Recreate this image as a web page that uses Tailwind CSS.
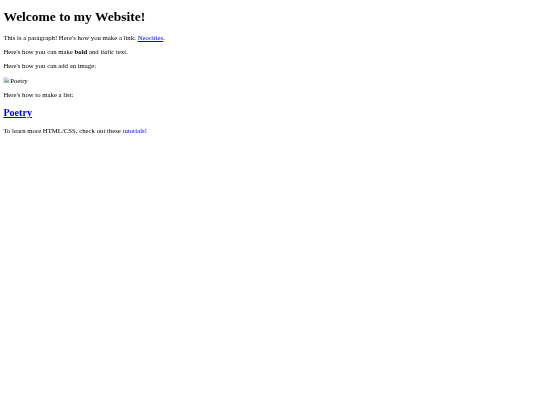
<!DOCTYPE html>
<html lang="en">
<head>
<meta charset="utf-8">
<title>Welcome</title>
<script src="https://cdn.jsdelivr.net/npm/@tailwindcss/browser@4"></script>
</head>
<body class="bg-white text-black font-['Liberation_Serif',serif]">
<main class="flex flex-col gap-[6.75px] px-[3.375px] pt-[9.05px] text-[6.75px] leading-[7.6px] blur-[0.25px]">
  <h1 class="text-[13.5px] leading-[15.6px] font-bold mb-[2.3px]">Welcome to my Website!</h1>
  <p>This is a paragraph! Here's how you make a link: <a href="#" class="text-[#0000ee] underline">Neocities</a>.</p>
  <p>Here's how you can make <strong class="font-bold">bold</strong> and <em class="italic">italic</em> text.</p>
  <p>Here's how you can add an image:</p>
  <p class="flex items-start">
    <svg class="w-[6.75px] h-[6.75px] shrink-0" viewBox="0 0 16 16" aria-hidden="true">
      <path d="M1.5 1.5h9l4 4v9h-13z" fill="#fff" stroke="#9aa0a6"/>
      <path d="M2.5 2.5h8v3h3v4l-4 3h-7z" fill="#c3d3ee"/>
      <path d="M2.5 12.5l4-5 3 3 4-3v5.500h-11z" fill="#5fa35f"/>
    </svg><span>Poetry</span>
  </p>
  <p>Here's how to make a list:</p>
  <h2 class="text-[10.125px] leading-[11.4px] font-bold my-[1.65px]"><a href="#" class="text-[#0000ee] underline">Poetry</a></h2>
  <p>To learn more HTML/CSS, check out these <a href="#" class="text-[#0000ee] underline">tutorials</a>!</p>
</main>
</body>
</html>
